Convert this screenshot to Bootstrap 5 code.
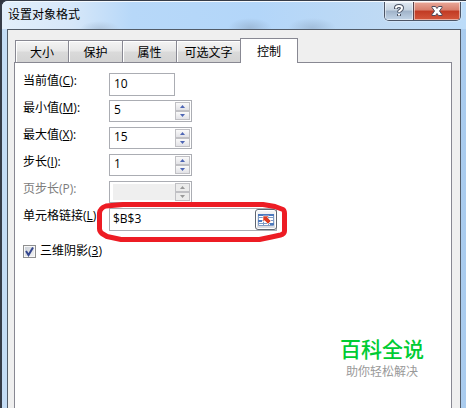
<!DOCTYPE html>
<html lang="zh-CN">
<head>
<meta charset="utf-8">
<meta name="viewport" content="width=device-width, initial-scale=1">
<title>设置对象格式</title>
<link rel="stylesheet" href="https://cdn.jsdelivr.net/npm/bootstrap@5.3.0/dist/css/bootstrap.min.css">
<style>
body { font: 12px/16px "Open Sans", "Noto Sans CJK SC", sans-serif; color: #000; background: #30343f; }
.dialog-window { border: 1px solid #363c48; border-width: 1px 0 0 2px; border-radius: 7px 0 0 0; padding: 0 5px 0 5px; background: linear-gradient(90deg, #c4dcf5, #b5d6f8 50%, #c0daf3 90%, #a9cbee); }
.title-row { height: 28px; margin: 0 -5px; padding: 0 5px 0 6px; border-radius: 6px 0 0 0; border-top: 1px solid #f4f9fe;
  background: radial-gradient(ellipse 22px 10px at 248px 26px, #9ebbd9 0, transparent 100%),
    radial-gradient(ellipse 24px 10px at 310px 26px, #a2bedb 0, transparent 100%),
    radial-gradient(ellipse 20px 8px at 98px 27px, #b2c8e0 0, transparent 100%),
    linear-gradient(90deg, #e3effb 0, #d6e7f9 70px, #b7d8f9 130px, #b3d6f9 55%, #c0daf3 85%, #bcdcf9); }
.title-text { font-size: 12px; line-height: 16px; padding-top: 5px; }
.caption-btns { height: 19px; border: 1px solid #4c5566; border-top: 0; border-radius: 0 0 5px 5px; overflow: hidden; box-shadow: 0 0 2px #fff; }
.caption-btn { border: 0; padding: 0; width: 28px; background: linear-gradient(#dfe8f1 0, #c6d3e1 45%, #9fb2c8 50%, #c3d5e8 100%); box-shadow: inset 0 0 0 1px #ffffff80; }
.close-btn { width: 47px; border-left: 1px solid #59434b; background: linear-gradient(#e9a899 0, #d77e6c 45%, #c13a23 50%, #d4573c 100%); }
.client-area { border: 1px solid #525c69; border-bottom: 0; background: #efefef; padding: 8px 8px 0 6px; }
.tab-strip { height: 25px; padding-left: 1px; margin-bottom: -1px; z-index: 1; }
.tab-btn { height: 23px; flex: 0 0 54px; padding: 2px 0 0; border: 1px solid #888892; margin-right: -1px; background: linear-gradient(#f4f4f4, #e7e7e7 48%, #dadada 52%, #d3d3d3); box-shadow: inset 1px 1px #fff; color: #000; line-height: 16px; }
.tab-btn + .tab-btn { flex-basis: 55px; }
.tab-strip .tab-btn.tab-wide { flex-basis: 65px; }
.tab-strip .tab-btn.tab-current { height: 25px; flex-basis: 58px; border-bottom: 0; background: #fff; }
.control-panel { border: 1px solid #888892; border-bottom: 0; background: #fff; padding: 10px 8px 0; }
.field-row { min-height: 27px; }
.field-label { width: 86px; height: 16px; white-space: nowrap; }
.dimmed { color: #7c7c7c; }
.value-box { height: 22px; width: 83px; border: 1px solid #abadb3; background: #fff; padding: 1px; }
.value-box.box-short { width: 66px; height: 23px; }
.value-box.box-long { width: 168px; height: 23px; padding: 0; }
.value-box input { border: 0; padding: 0 0 2px 3px; background: none; min-width: 0; color: #000; outline: 0; }
.value-box input:disabled { background: #efefef; margin: 1px 0 1px 2px; }
.spin-pair { width: 15px; flex: none; }
.spin-btn { display: flex; align-items: center; justify-content: center; padding: 0; height: 9px; border: 1px solid #c0c0c4; background: linear-gradient(#fafafa, #e2e2e6); line-height: 0; color: #4e66b4; }
.spin-btn:disabled { color: #999; background: #ececec; }
.picker-btn { width: 22px; flex: none; padding: 0; margin-right: -1px; border: 1px solid #5f6671; border-radius: 3px; background: linear-gradient(#f7f7f7, #d7d9df); box-shadow: inset 0 0 0 1px #fff; line-height: 0; }
.highlight-ring { position: absolute; left: -13px; top: -8px; pointer-events: none; }
.shadow-check { appearance: none; width: 13px; height: 13px; margin: 0; border: 1px solid #8e8f8f; box-shadow: inset 0 0 0 1px #f8f8f8; background: linear-gradient(135deg, #c8ced6, #f5f5f5); }
.check-mark { position: absolute; left: 0; top: 0; pointer-events: none; }
.site-logo { padding: 75px 19px 0 0; }
.brand-name { font: 500 21px/28px "Noto Sans CJK SC", sans-serif; color: #00cc33; }
.brand-tag { font: 12px/17px "Noto Sans CJK SC", sans-serif; color: #999; }
</style>
<script src="https://cdn.jsdelivr.net/npm/bootstrap@5.3.0/dist/js/bootstrap.bundle.min.js"></script>
</head>
<body>
<div class="dialog-window min-vh-100 d-flex flex-column">
  <header class="title-row d-flex justify-content-between align-items-start">
    <div class="title-text">设置对象格式</div>
    <div class="caption-btns d-flex">
      <button class="caption-btn" type="button" aria-label="帮助"><svg class="d-block mx-auto" width="12" height="14" viewBox="0 0 12 14" fill="none"><path d="M3 5V4q0-2 3-2t3 2q0 1.500-1.500 2.300T6 8.500M6 10v2" stroke="#4c5566" stroke-width="4"/><path d="M3 4.500V4q0-2 3-2t3 2q0 1.500-1.500 2.300T6 8M6 10v1.500" stroke="#fff" stroke-width="2"/></svg></button>
      <button class="caption-btn close-btn" type="button" aria-label="关闭"><svg class="d-block mx-auto" width="14" height="12" viewBox="0 0 14 12"><path d="M2 1.500h3.500L7 3.500l1.500-2H12v1L9.500 6l2.500 3.500v1H8.500L7 8.500l-1.500 2H2v-1L4.500 6 2 2.500z" fill="#fff" stroke="#4d4a5b"/></svg></button>
    </div>
  </header>
  <main class="client-area flex-grow-1 d-flex flex-column">
    <div class="tab-strip d-flex align-items-end position-relative" role="tablist">
      <button class="tab-btn" type="button" role="tab">大小</button>
      <button class="tab-btn" type="button" role="tab">保护</button>
      <button class="tab-btn" type="button" role="tab">属性</button>
      <button class="tab-btn tab-wide" type="button" role="tab">可选文字</button>
      <button class="tab-btn tab-current" type="button" role="tab" aria-selected="true">控制</button>
    </div>
    <form class="control-panel flex-grow-1">
      <div class="field-row d-flex align-items-start">
        <label class="field-label" for="cur">当前值(<u>C</u>):</label>
        <div class="value-box box-short d-flex"><input class="w-100" id="cur" value="10"></div>
      </div>
      <div class="field-row d-flex align-items-start">
        <label class="field-label" for="min">最小值(<u>M</u>):</label>
        <div class="value-box d-flex"><input class="flex-grow-1" id="min" value="5">
          <span class="spin-pair d-flex flex-column"><button class="spin-btn" type="button" aria-label="增加"><svg width="5" height="3"><path d="M0 3L2.500 0 5 3z" fill="currentColor"/></svg></button><button class="spin-btn" type="button" aria-label="减少"><svg width="5" height="3"><path d="M0 0h5L2.500 3z" fill="currentColor"/></svg></button></span></div>
      </div>
      <div class="field-row d-flex align-items-start">
        <label class="field-label" for="max">最大值(<u>X</u>):</label>
        <div class="value-box d-flex"><input class="flex-grow-1" id="max" value="15">
          <span class="spin-pair d-flex flex-column"><button class="spin-btn" type="button" aria-label="增加"><svg width="5" height="3"><path d="M0 3L2.500 0 5 3z" fill="currentColor"/></svg></button><button class="spin-btn" type="button" aria-label="减少"><svg width="5" height="3"><path d="M0 0h5L2.500 3z" fill="currentColor"/></svg></button></span></div>
      </div>
      <div class="field-row d-flex align-items-start">
        <label class="field-label" for="step">步长(<u>I</u>):</label>
        <div class="value-box d-flex"><input class="flex-grow-1" id="step" value="1">
          <span class="spin-pair d-flex flex-column"><button class="spin-btn" type="button" aria-label="增加"><svg width="5" height="3"><path d="M0 3L2.500 0 5 3z" fill="currentColor"/></svg></button><button class="spin-btn" type="button" aria-label="减少"><svg width="5" height="3"><path d="M0 0h5L2.500 3z" fill="currentColor"/></svg></button></span></div>
      </div>
      <div class="field-row d-flex align-items-start">
        <label class="field-label dimmed" for="page">页步长(P):</label>
        <div class="value-box d-flex"><input class="flex-grow-1" id="page" disabled>
          <span class="spin-pair d-flex flex-column"><button class="spin-btn" type="button" disabled aria-label="增加"><svg width="5" height="3"><path d="M0 3L2.500 0 5 3z" fill="currentColor"/></svg></button><button class="spin-btn" type="button" disabled aria-label="减少"><svg width="5" height="3"><path d="M0 0h5L2.500 3z" fill="currentColor"/></svg></button></span></div>
      </div>
      <div class="field-row d-flex align-items-start">
        <label class="field-label" for="cell">单元格链接(<u>L</u>)</label>
        <div class="value-box box-long d-flex position-relative"><input class="flex-grow-1" id="cell" value="$B$3">
          <button class="picker-btn" type="button" aria-label="选择单元格"><svg width="16" height="14" viewBox="0 0 16 14"><path fill="#fff" stroke="#7e9ac4" d="M.5 1.500h15v11H.5zM.5 4.500h15M.5 7.500h15M.5 10.500h15M5.500 1.500v11M10.500 1.500v11"/><path fill="#4d79bd" d="M0 1h16v2H0zM0 7h4v2H0zM12 10h4v2h-4z"/><path d="M5 3h6L9.500 4.500 13 8l-3 3-3.500-3.500L5 9z" fill="#df3b20" stroke="#fff" stroke-width=".6"/></svg></button>
          <svg class="highlight-ring" width="192" height="44" viewBox="0 0 192 44" fill="none" stroke="#ed1c24" stroke-width="5" stroke-linejoin="round"><path d="M9 5L26 3.500h140l12 2 8 3q1.500 1 1.500 4V30q0 3-4 4l-9 2-12 2.500H24L10 35.500l-5-3q-2.500-2-2.500-5V12Q3 7 9 5z"/></svg></div>
      </div>
      <div class="d-flex align-items-center position-relative pt-2">
        <span class="position-relative d-flex"><input class="shadow-check" type="checkbox" id="shade" checked><svg class="check-mark" width="13" height="13" viewBox="0 0 13 13" fill="none"><path d="M3 6l2.500 4L10 2.500" stroke="#34468e" stroke-width="2"/></svg></span>
        <label class="ps-1" for="shade">三维阴影(<u>3</u>)</label>
      </div>
      <div class="site-logo d-flex flex-column align-items-end">
        <div class="text-center"><div class="brand-name">百科全说</div><div class="brand-tag">助你轻松解决</div></div>
      </div>
    </form>
  </main>
</div>
</body>
</html>
